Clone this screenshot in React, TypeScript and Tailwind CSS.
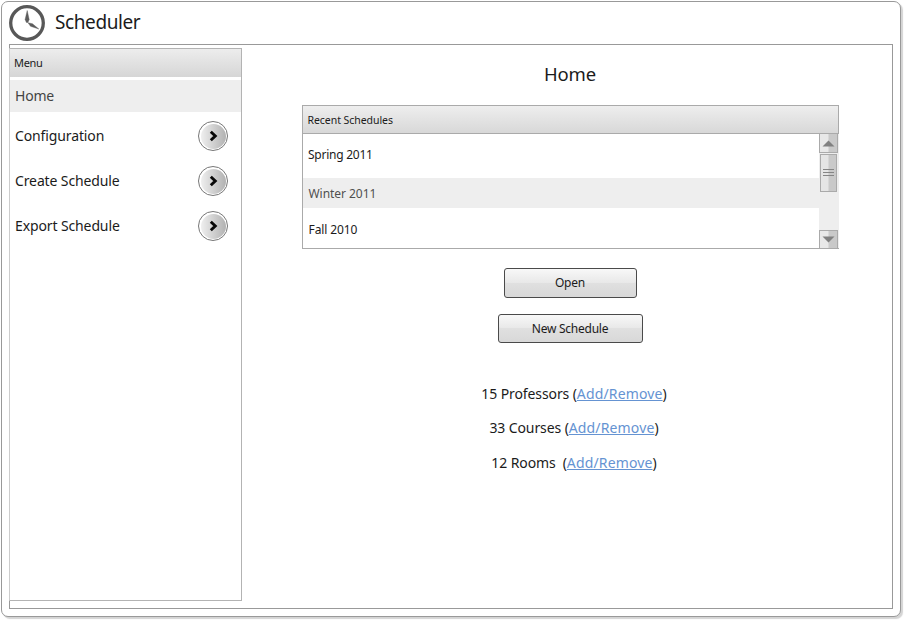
const menuItems = ["Configuration", "Create Schedule", "Export Schedule"];

const totals = [
  { label: "15 Professors (", row: "h-[34px]" },
  { label: "33 Courses (", row: "h-[35px]" },
  { label: "12 Rooms\u00a0 (", row: "h-[35px]" },
];

function ClockLogo() {
  return (
    <svg width="38" height="38" viewBox="0 0 38 38" className="-mt-px -ml-px shrink-0">
      <circle cx="19" cy="19" r="16.3" fill="white" stroke="#585858" strokeWidth="3.3" />
      <path d="M19.2 6.5 L21.2 15.5 L19.9 18.5 L18.4 18.5 L17.1 15.5 Z" fill="#5c5c5c" stroke="#5c5c5c" strokeWidth="0.4" />
      <path d="M20 18.7 L24.5 19.8 L30.8 25 L22.5 22.3 Z" fill="#5c5c5c" stroke="#5c5c5c" strokeWidth="0.4" />
    </svg>
  );
}

function GoButton() {
  return (
    <button className="mt-px flex size-[30px] items-center justify-center rounded-full border border-[#777] bg-white p-[2px]">
      <span className="flex size-[25px] shrink-0 items-center justify-center rounded-full bg-linear-to-r from-[#efefef] to-[#b2b2b2]">
        <svg width="10" height="14" viewBox="0 0 10 14" fill="none">
          <path d="M2.8 2.7 L7.3 7 L2.8 11.3" stroke="#080808" strokeWidth="2.9" />
        </svg>
      </span>
    </button>
  );
}

function ScrollBar() {
  return (
    <div className="-mr-px flex w-[20px] shrink-0 flex-col bg-[#eee]">
      <div className="mr-px flex h-[19px] items-center justify-center border border-t-0 border-[#aaa] bg-linear-to-r from-[#e8e8e8] from-48% to-[#c9c9c9] to-52%">
        <svg width="13" height="7" viewBox="0 0 13 7"><path d="M0.5 6.5 L6.5 0.5 L12.5 6.5 Z" fill="#808080" /></svg>
      </div>
      <div className="mt-px mr-[2px] ml-px flex h-[38px] flex-col items-center justify-center gap-[2px] border border-[#aaa] bg-linear-to-r from-[#e5e5e5] from-48% to-[#c9c9c9] to-52%">
        <span className="-mt-px h-px w-[11px] bg-[#858585]" />
        <span className="h-px w-[11px] bg-[#858585]" />
        <span className="h-px w-[11px] bg-[#858585]" />
      </div>
      <div className="mt-auto mr-px flex h-[18px] items-center justify-center border border-b-0 border-[#aaa] bg-linear-to-r from-[#e8e8e8] from-48% to-[#c9c9c9] to-52%">
        <svg width="13" height="7" viewBox="0 0 13 7"><path d="M0.5 0.5 L6.5 6.5 L12.5 0.5 Z" fill="#808080" /></svg>
      </div>
    </div>
  );
}

export default function App() {
  return (
    <div className="h-[620px] w-[904px] overflow-hidden bg-white pt-px pl-px font-['Noto_Sans',sans-serif] text-[#1b1b1b]">
      <div className="flex h-[616px] w-[900px] flex-col rounded-[7px] border border-[#999] bg-white pl-[7px] shadow-[2px_2px_1px_#d4d4d4]">
        <header className="flex h-[42px] items-center">
          <ClockLogo />
          <h1 className="-mt-[2px] ml-[9px] text-[19px] leading-6 tracking-[-0.4px]">Scheduler</h1>
        </header>
        <div className="flex h-[565px] w-[884px] border border-[#999] pt-[3px]">
          <nav className="-ml-px flex h-[553px] w-[233px] flex-col border border-[#b3b3b3] border-l-[#ccc]">
            <div className="h-[28px] bg-linear-to-b from-[#ededed] to-[#d6d6d6] pl-[4px] text-[11px] leading-[28px] tracking-[-0.3px]">Menu</div>
            <div className="mt-[3px] mb-px h-[32px] bg-[#eee] pl-[5px] text-[14px] leading-[31px] tracking-[-0.2px] text-[#444]">Home</div>
            {menuItems.map((item) => (
              <div key={item} className="flex h-[45px] items-center justify-between pr-[13px] pl-[5px]">
                <span className="text-[14px] tracking-[-0.12px]">{item}</span>
                <GoButton />
              </div>
            ))}
          </nav>
          <main className="flex w-[649px] flex-col items-center pl-[7px]">
            <h2 className="mt-[14px] h-[24px] text-[18.5px] leading-6 tracking-[-0.2px]">Home</h2>
            <section className="mt-[19px] h-[144px] w-[537px] border border-[#aaa]">
              <div className="h-[28px] border-b border-[#aaa] bg-linear-to-b from-[#eee] to-[#d8d8d8] pl-[5px] text-[10.5px] leading-[28px] tracking-[-0.05px]">Recent Schedules</div>
              <div className="flex h-[114px]">
                <div className="flex-1 text-[12px]">
                  <div className="h-[44px] pl-[5.5px] leading-[41px] tracking-[-0.25px]">Spring 2011</div>
                  <div className="h-[30px] bg-[#eee] pl-[6px] leading-[31px] tracking-[-0.05px] text-[#505050]">Winter 2011</div>
                  <div className="h-[40px] pl-[6px] leading-[43px] tracking-[-0.1px]">Fall 2010</div>
                </div>
                <ScrollBar />
              </div>
            </section>
            <button className="mt-[19px] h-[30px] w-[133px] rounded-[3px] border border-[#4a4a4a] bg-linear-to-b from-[#f8f8f8] via-[#e8e8e8] via-50% to-[#e0e0e0] text-[12px] tracking-[-0.2px] shadow-[inset_0_-14px_0_#00000008]">Open</button>
            <button className="mt-[16px] h-[29px] w-[145px] rounded-[3px] border border-[#4a4a4a] bg-linear-to-b from-[#f8f8f8] via-[#e8e8e8] via-50% to-[#e0e0e0] text-[12px] tracking-[-0.25px] shadow-[inset_0_-14px_0_#00000008]">New Schedule</button>
            <div className="mt-[33px] flex flex-col items-center pl-[8px] text-[14px] tracking-[-0.1px]">
              {totals.map(({ label, row }) => (
                <div key={label} className={`${row} flex items-center whitespace-pre`}>
                  {label}<a href="#" className="tracking-[0.15px] text-[#6593d2] underline">Add/Remove</a>)
                </div>
              ))}
            </div>
          </main>
        </div>
      </div>
    </div>
  );
}
